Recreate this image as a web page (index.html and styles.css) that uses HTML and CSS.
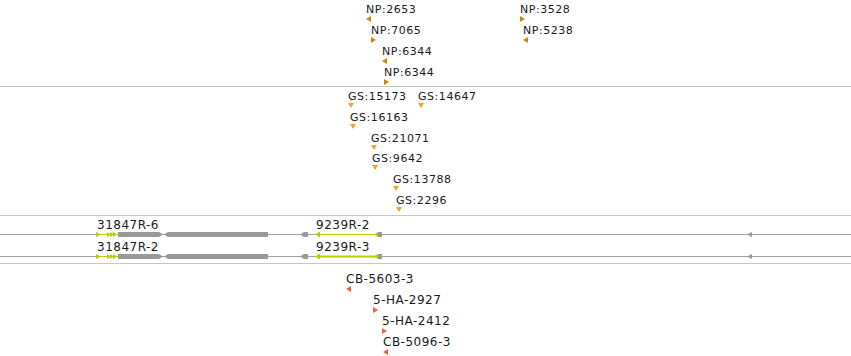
FILE: index.html
```html
<!DOCTYPE html>
<html lang="en">
<head>
    <meta charset="UTF-8">
    <title>Track view</title>
    <link rel="stylesheet" href="styles.css">
</head>
<body>
    <div class="tracks">
        <div class="track track-np" id="trackNp"></div>
        <div class="track track-gs" id="trackGs"></div>

        <div class="track track-gene">
            <div class="gene-row">
                <div class="gene-labels">
                    <span class="gene-label" style="left:97px">31847R-6</span>
                    <span class="gene-label" style="left:316px">9239R-2</span>
                </div>
                <svg class="gene-svg" width="851" height="10" viewBox="0 0 851 10">
                    <rect class="axis" x="0" y="4" width="851" height="1"/>
                    <g class="yg">
                        <rect x="96" y="4" width="22" height="1"/>
                        <polygon points="96,2 101,4.5 96,7"/>
                        <polygon points="107,2 111,4.5 107,7"/>
                        <polygon points="110,2 114,4.5 110,7"/>
                        <polygon points="113,2 117,4.5 113,7"/>
                        <polygon points="315,4.5 320,1.5 320,7.5"/>
                        <rect x="320" y="4" width="56" height="1"/>
                        <polygon points="374,4.5 378,2 378,7"/>
                    </g>
                    <g class="gr">
                        <polygon points="118,2 159,2 163,4.5 159,7 118,7"/>
                        <polygon points="164,4.5 168,2 268,2 268,7 168,7"/>
                        <polygon points="300,4.5 304,2 308,2 308,7 304,7"/>
                        <rect x="378" y="2" width="4" height="5"/>
                        <polygon points="747,4.5 752,2 752,7"/>
                    </g>
                </svg>
            </div>
            <div class="gene-row">
                <div class="gene-labels">
                    <span class="gene-label" style="left:97px">31847R-2</span>
                    <span class="gene-label" style="left:316px">9239R-3</span>
                </div>
                <svg class="gene-svg" width="851" height="10" viewBox="0 0 851 10">
                    <rect class="axis" x="0" y="4" width="851" height="1"/>
                    <g class="yg">
                        <rect x="96" y="4" width="22" height="1"/>
                        <polygon points="96,2 101,4.5 96,7"/>
                        <polygon points="107,2 111,4.5 107,7"/>
                        <polygon points="110,2 114,4.5 110,7"/>
                        <polygon points="113,2 117,4.5 113,7"/>
                        <polygon points="315,4.5 320,1.5 320,7.5"/>
                        <rect x="320" y="3.5" width="56" height="2"/>
                        <polygon points="374,4.5 378,2 378,7"/>
                    </g>
                    <g class="gr">
                        <polygon points="118,2 159,2 163,4.5 159,7 118,7"/>
                        <polygon points="164,4.5 168,2 268,2 268,7 168,7"/>
                        <polygon points="300,4.5 304,2 308,2 308,7 304,7"/>
                        <rect x="378" y="2" width="4" height="5"/>
                        <polygon points="747,4.5 752,2 752,7"/>
                    </g>
                </svg>
            </div>
        </div>

        <div class="track track-cb" id="trackCb"></div>
    </div>

    <script>
        // x = position on the canvas, y = top of the label, dir = strand marker
        const features = {
            trackNp: [
                { name: 'NP:2653', x: 366, y: 3, dir: 'left' },
                { name: 'NP:7065', x: 371, y: 24, dir: 'right' },
                { name: 'NP:6344', x: 382, y: 45, dir: 'left' },
                { name: 'NP:6344', x: 384, y: 66, dir: 'right' },
                { name: 'NP:3528', x: 520, y: 3, dir: 'right' },
                { name: 'NP:5238', x: 523, y: 24, dir: 'left' }
            ],
            trackGs: [
                { name: 'GS:15173', x: 348, y: 3, dir: 'down' },
                { name: 'GS:14647', x: 418, y: 3, dir: 'down' },
                { name: 'GS:16163', x: 350, y: 24, dir: 'down' },
                { name: 'GS:21071', x: 371, y: 45, dir: 'down' },
                { name: 'GS:9642', x: 372, y: 65, dir: 'down' },
                { name: 'GS:13788', x: 393, y: 86, dir: 'down' },
                { name: 'GS:2296', x: 396, y: 107, dir: 'down' }
            ],
            trackCb: [
                { name: 'CB-5603-3', x: 346, y: 9, dir: 'left' },
                { name: '5-HA-2927', x: 373, y: 30, dir: 'right' },
                { name: '5-HA-2412', x: 382, y: 51, dir: 'right' },
                { name: 'CB-5096-3', x: 383, y: 72, dir: 'left' }
            ]
        };

        const marks = {
            left: '<polygon points="0,3 5,0 5,6"/>',
            right: '<polygon points="0,0 5,3 0,6"/>',
            down: '<polygon points="0,0 6,0 3,5"/>'
        };

        for (const trackId in features) {
            const track = document.getElementById(trackId);
            features[trackId].forEach(function (f) {
                const item = document.createElement('div');
                item.className = 'feat';
                item.style.left = f.x + 'px';
                item.style.top = f.y + 'px';

                const label = document.createElement('span');
                label.className = 'feat-label';
                label.textContent = f.name;

                item.appendChild(label);
                item.insertAdjacentHTML('beforeend',
                    '<svg class="mark" width="6" height="6" viewBox="0 0 6 6">' + marks[f.dir] + '</svg>');
                track.appendChild(item);
            });
        }
    </script>
</body>
</html>
```

FILE: styles.css
```css
html, body {
    margin: 0;
    padding: 0;
    background: #fff;
    overflow: hidden;
}
body {
    font-family: "DejaVu Sans", Verdana, sans-serif;
    color: #1a1a1a;
}
.tracks {
    width: 851px;
    height: 356px;
}
.track {
    position: relative;
    border-bottom: 1px solid #c6c6c6;
}
.track-np {
    height: 86px;
}
.track-gs {
    height: 128px;
}
.track-gene {
    height: 45px;
}
.track-cb {
    height: 94px;
    border-bottom: none;
}

/* point features */
.feat {
    position: absolute;
    display: flex;
    flex-direction: column;
    align-items: flex-start;
}
.feat-label {
    font-size: 11px;
    line-height: 13px;
    letter-spacing: 0.55px;
    white-space: nowrap;
}
.mark {
    display: block;
}
.track-np .mark {
    fill: #cc8800;
}
.track-gs .mark {
    fill: #f5a325;
}
.track-cb .feat-label {
    font-size: 12px;
    letter-spacing: 0.5px;
}
.track-cb .mark {
    fill: #f2603e;
}

/* gene models */
.gene-row {
    height: 22px;
}
.gene-row:first-child {
    margin-top: 2px;
}
.gene-labels {
    position: relative;
    height: 12px;
}
.gene-label {
    position: absolute;
    top: 0;
    font-size: 12px;
    line-height: 14px;
    letter-spacing: 0.5px;
    white-space: nowrap;
}
.gene-svg {
    display: block;
}
.gene-svg .axis {
    fill: #a0a0a0;
}
.gene-svg .yg {
    fill: #bccc00;
}
.gene-svg .gr {
    fill: #999;
}
```
